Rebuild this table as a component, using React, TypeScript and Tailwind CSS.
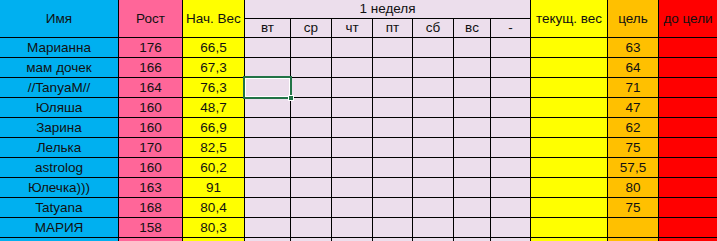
import React from 'react';

type Row = { name: string; height: string; start: string; goal: string };

const rows: Row[] = [
  { name: 'Марианна', height: '176', start: '66,5', goal: '63' },
  { name: 'мам дочек', height: '166', start: '67,3', goal: '64' },
  { name: '//TanyaM//', height: '164', start: '76,3', goal: '71' },
  { name: 'Юляша', height: '160', start: '48,7', goal: '47' },
  { name: 'Зарина', height: '160', start: '66,9', goal: '62' },
  { name: 'Лелька', height: '170', start: '82,5', goal: '75' },
  { name: 'astrolog', height: '160', start: '60,2', goal: '57,5' },
  { name: 'Юлечка)))', height: '163', start: '91', goal: '80' },
  { name: 'Tatyana', height: '168', start: '80,4', goal: '75' },
  { name: 'МАРИЯ', height: '158', start: '80,3', goal: '' },
  { name: '', height: '', start: '', goal: '' },
];

const days = ['вт', 'ср', 'чт', 'пт', 'сб', 'вс', '-'];

const cell = 'flex items-center justify-center whitespace-nowrap leading-none';

const App: React.FC = () => {
  return (
    <div className="w-[717px] h-[241px] overflow-hidden bg-white">
      <div
        className="grid gap-px bg-black text-[13.5px] text-[#111]"
        style={{ fontFamily: '"Liberation Sans", Arial, sans-serif' }}
      >
        <div className="grid grid-cols-[118px_63px_61px_45px_40px_40px_39px_40px_36px_39px_76px_50px_58px] grid-rows-[18px_18px_repeat(11,19px)] gap-px -mr-px">
          {/* header */}
          <div className={`${cell} row-span-2 bg-[#00b0f0]`}>Имя</div>
          <div className={`${cell} row-span-2 bg-[#ff6699]`}>Рост</div>
          <div className={`${cell} row-span-2 bg-[#ffff00]`}>Нач. Вес</div>
          <div className={`${cell} col-span-7 bg-[#ecdeec]`}>1 неделя</div>
          <div className={`${cell} row-span-2 bg-[#ffff00]`}>текущ. вес</div>
          <div className={`${cell} row-span-2 bg-[#ffc000]`}>цель</div>
          <div className={`${cell} row-span-2 bg-[#ff0000]`}>до цели</div>
          {days.map((d) => (
            <div key={d} className={`${cell} bg-[#ecdeec]`}>
              {d}
            </div>
          ))}

          {/* body */}
          {rows.map((r, i) => (
            <React.Fragment key={i}>
              <div className={`${cell} bg-[#00b0f0]`}>{r.name}</div>
              <div className={`${cell} bg-[#ff6699]`}>{r.height}</div>
              <div className={`${cell} bg-[#ffff00]`}>{r.start}</div>
              {days.map((d, j) => (
                <div key={d} className="relative bg-[#ecdeec]">
                  {i === 2 && j === 0 && (
                    <div className="absolute -inset-[2px] z-10 border-2 border-[#217346] shadow-[inset_0_0_0_1px_#ffffff]">
                      <div className="absolute -right-[4px] -bottom-[4px] w-[6px] h-[6px] bg-[#217346] border border-white" />
                    </div>
                  )}
                </div>
              ))}
              <div className="bg-[#ffff00]" />
              <div className={`${cell} bg-[#ffc000]`}>{r.goal}</div>
              <div className="bg-[#ff0000]" />
            </React.Fragment>
          ))}
        </div>
      </div>
    </div>
  );
};

export default App;
